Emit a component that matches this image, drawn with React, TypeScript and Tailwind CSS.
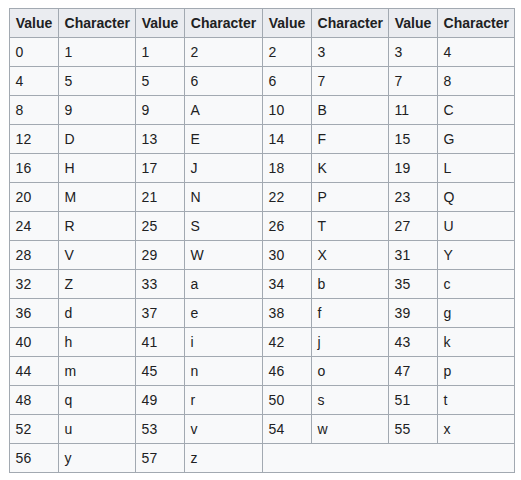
const ALPHABET = '123456789ABCDEFGHJKLMNPQRSTUVWXYZabcdefghijkmnopqrstuvwxyz'

const widths = [49, 77, 49, 78, 49, 77, 49, 77]

export default function App() {
  const rows: number[][] = []
  for (let i = 0; i < 15; i++) {
    rows.push([4 * i, 4 * i + 1, 4 * i + 2, 4 * i + 3].filter((v) => v < 58))
  }

  const td = 'border border-[#a2a9b1] px-[5.6px] py-[2.8px] text-left align-middle'
  const th = 'border border-[#a2a9b1] px-[5.6px] py-[2.8px] bg-[#eaecf0] font-bold text-center'

  return (
    <div className="min-h-screen bg-white pt-2 pl-[9px] text-[14px] leading-[22.4px] text-[#202122] font-['Liberation_Sans',Arial,sans-serif]">
      <table className="table-fixed border-collapse bg-[#f8f9fa] w-[506px]">
        <colgroup>
          {widths.map((w, i) => (
            <col key={i} style={{ width: w }} />
          ))}
        </colgroup>
        <thead>
          <tr>
            {[0, 1, 2, 3].map((k) => (
              <>
                <th key={`v${k}`} className={th}>Value</th>
                <th key={`c${k}`} className={th}>Character</th>
              </>
            ))}
          </tr>
        </thead>
        <tbody>
          {rows.map((row, i) => (
            <tr key={i}>
              {row.map((v) => (
                <>
                  <td key={`v${v}`} className={td}>{v}</td>
                  <td key={`c${v}`} className={td}>{ALPHABET[v]}</td>
                </>
              ))}
              {row.length < 4 && <td colSpan={(4 - row.length) * 2} className={td}></td>}
            </tr>
          ))}
        </tbody>
      </table>
    </div>
  )
}
